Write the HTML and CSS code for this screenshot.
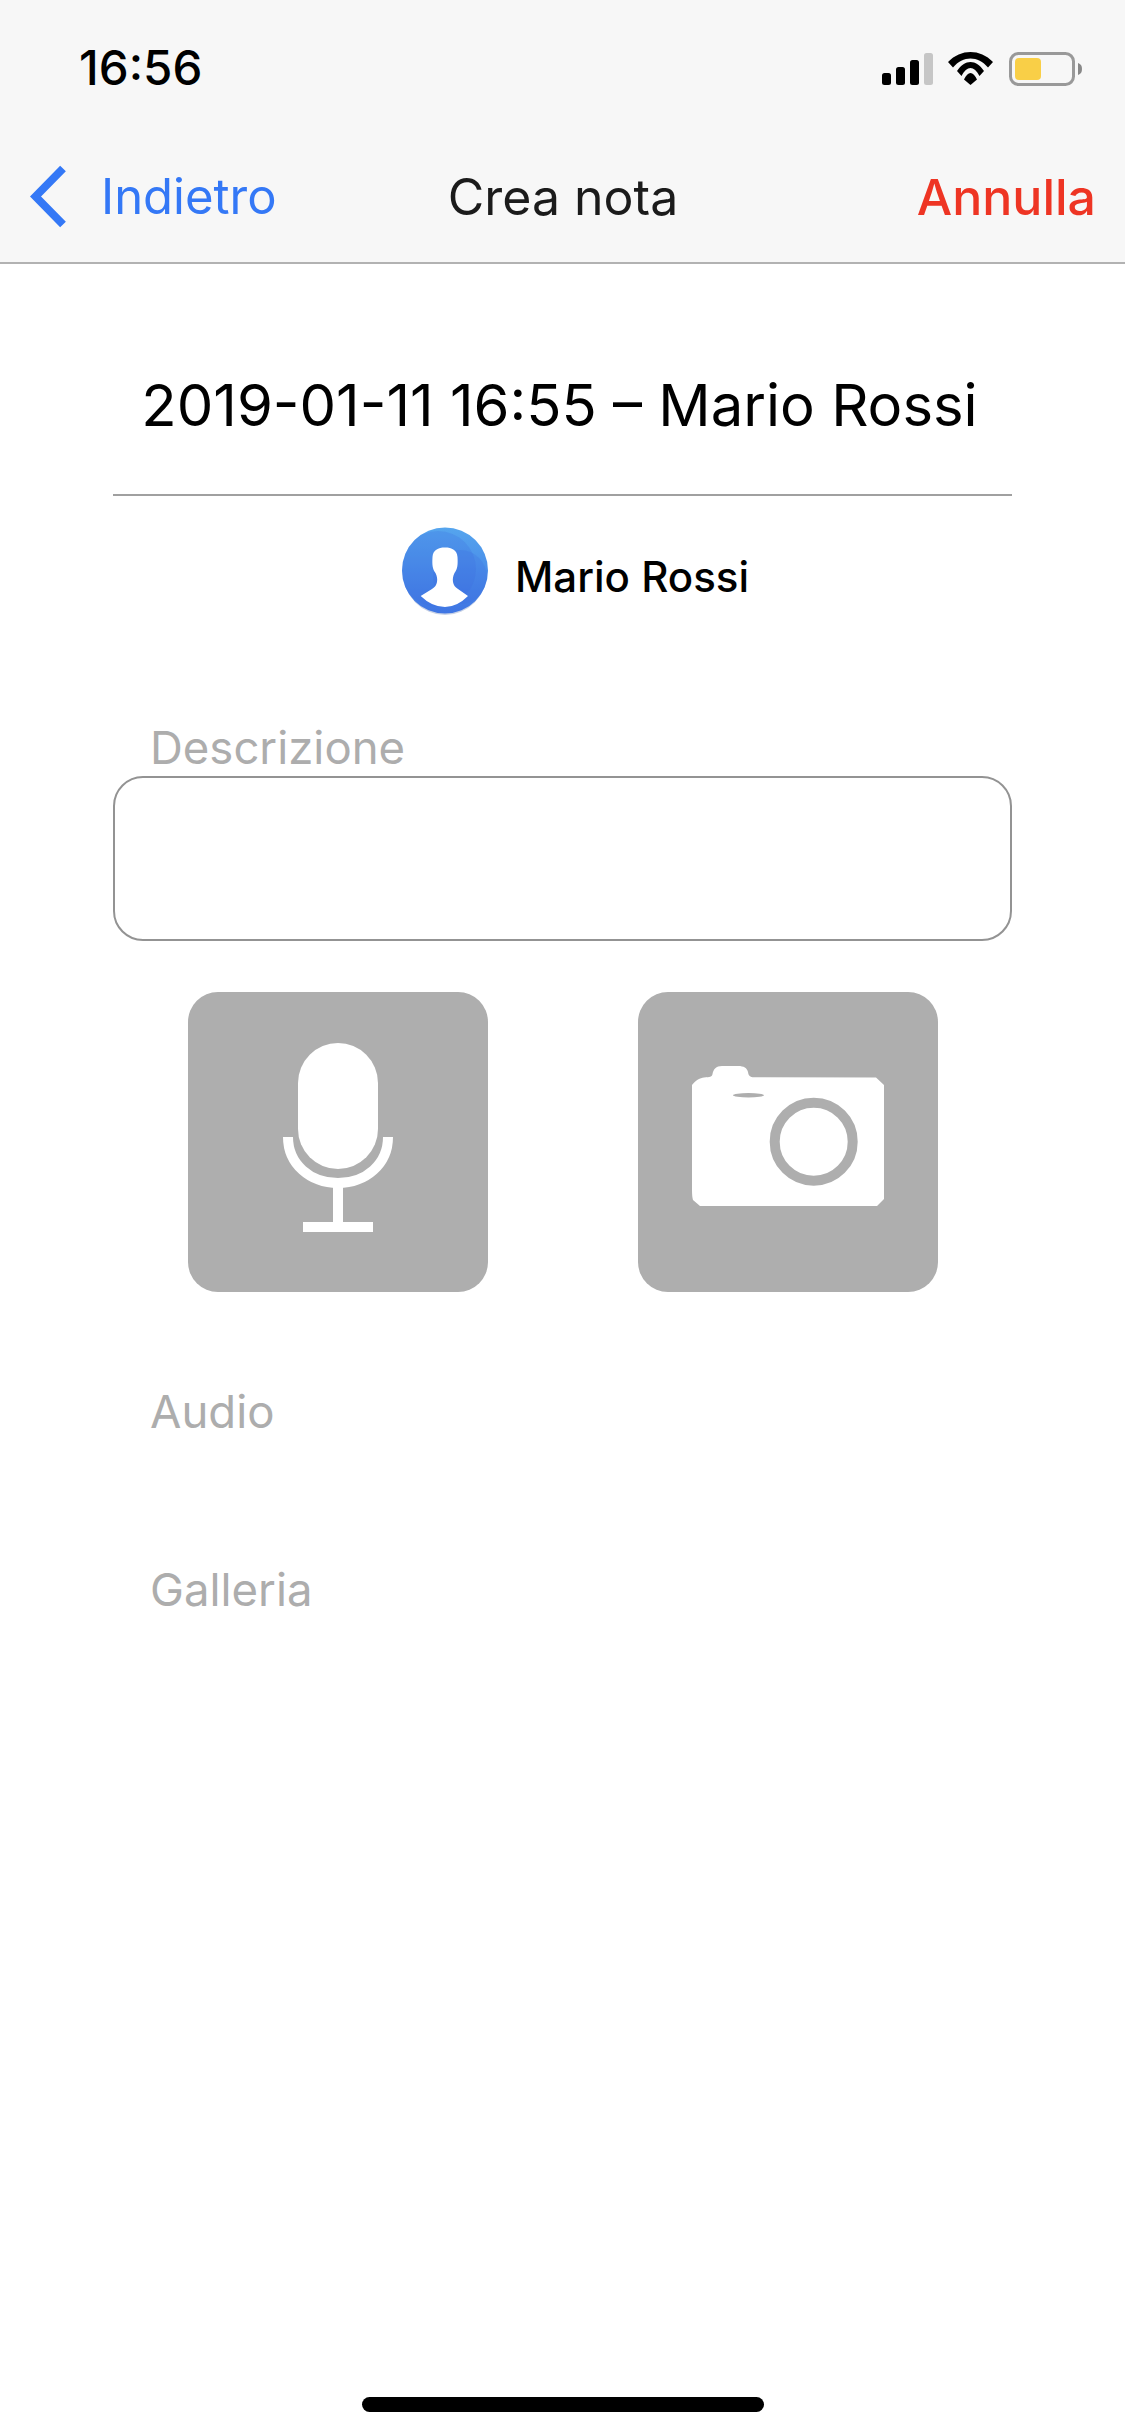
FILE: index.html
```html
<!DOCTYPE html>
<html lang="it">
<head>
  <meta charset="UTF-8" />
  <meta name="viewport" content="width=device-width, initial-scale=1.0" />
  <title>Crea nota</title>
  <link rel="stylesheet" href="styles.css">
</head>
<body>

  <header class="top">
    <div class="status">
      <span class="clock">16:56</span>
      <div class="status-icons">
        <svg class="ico-signal" width="51" height="32" viewBox="0 0 51 32">
          <rect x="0" y="20" width="9" height="12" rx="2.5" fill="#000"/>
          <rect x="14" y="14" width="9" height="18" rx="2.5" fill="#000"/>
          <rect x="28" y="7" width="9" height="25" rx="2.5" fill="#000"/>
          <rect x="42" y="0" width="9" height="32" rx="2.5" fill="#c6c6c6"/>
        </svg>
        <svg class="ico-wifi" width="45" height="33" viewBox="0 0 45 33">
          <path d="M0 10 C13 -3.300 32 -3.300 45 10 L40 15.500 C30 3.500 15 3.500 5 15.500 Z" fill="#000"/>
          <path d="M9 19 C17 7 28 7 36 19 L31.500 24 C26 13.300 19 13.300 13.500 24 Z" fill="#000"/>
          <path d="M16 27.500 C20 18.800 25 18.800 29 27.500 L22.500 33 Z" fill="#000"/>
        </svg>
        <svg class="ico-battery" width="73" height="34" viewBox="0 0 73 34">
          <rect x="1.500" y="1.500" width="63" height="31" rx="8" fill="none" stroke="#999" stroke-width="3"/>
          <rect x="6" y="6" width="26" height="22" rx="4" fill="#f9cf47"/>
          <path d="M69 11 C72 12 73 14 73 17 C73 20 72 22 69 23 Z" fill="#888"/>
        </svg>
      </div>
    </div>
    <nav class="navbar">
      <a class="nav-back" href="#">
        <svg width="36" height="64" viewBox="0 0 36 64">
          <path d="M33 3.500 L5.500 31.500 L33 59.500" fill="none" stroke="#3478f6" stroke-width="8"/>
        </svg>
        <span>Indietro</span>
      </a>
      <span class="nav-title">Crea nota</span>
      <a class="nav-cancel" href="#">Annulla</a>
    </nav>
  </header>

  <main class="content">
    <h1 class="note-title">2019-01-11 16:55 – Mario Rossi</h1>

    <div class="author">
      <svg class="avatar" width="86" height="88" viewBox="0 0 86 88">
        <defs>
          <linearGradient id="avatarBg" x1="0" y1="0" x2="0" y2="1">
            <stop offset="0" stop-color="#55a5ee"/>
            <stop offset="1" stop-color="#3f75e3"/>
          </linearGradient>
          <clipPath id="avatarClip"><circle cx="43" cy="43.500" r="43"/></clipPath>
        </defs>
        <ellipse cx="43" cy="45" rx="42" ry="43" fill="#c9d3e6"/>
        <circle cx="43" cy="43.500" r="43" fill="url(#avatarBg)"/>
        <g clip-path="url(#avatarClip)">
          <circle cx="36" cy="42" r="38" fill="#3a68dd" opacity=".22"/>
          <circle cx="58" cy="50" r="27" fill="#3a68dd" opacity=".22"/>
        </g>
        <path d="M43 20.500 C50 20.500 55 23 55.500 30 C56 38 55.500 42 52.500 46 C51 49 50.500 52 51 55 C51.500 58 53 60 56 62 L66 69 Q55 80 43 80 Q30 80 18.700 69 L30 62 C33 60 34.500 58 35 55 C35.500 52 35 49 33.500 46 C30.500 42 30 38 30.500 30 C31 23 36 20.500 43 20.500 Z" fill="#fff"/>
      </svg>
      <span class="author-name">Mario Rossi</span>
    </div>

    <label class="field-label" for="descrizione">Descrizione</label>
    <div class="text-box" id="descrizione"></div>

    <div class="actions">
      <button class="action-btn" type="button" aria-label="Audio">
        <svg width="300" height="300" viewBox="0 0 300 300">
          <rect x="110" y="51" width="80" height="126" rx="40" fill="#fff"/>
          <path d="M100 145 C100 172 122 191 150 191 C178 191 200 172 200 145" fill="none" stroke="#fff" stroke-width="10"/>
          <rect x="145" y="191" width="10" height="42" fill="#fff"/>
          <rect x="115" y="230" width="70" height="10" fill="#fff"/>
        </svg>
      </button>
      <button class="action-btn" type="button" aria-label="Foto">
        <svg width="300" height="300" viewBox="0 0 300 300">
          <path d="M54 93 C58 88 62 86 66 85.500 C72 85 74 85 74.500 82 C75.500 77 78 74 84 74 H100 C106 74 109 76 110 80 C110.500 84 112 85 116 85.300 L238 85.500 L246 93 V207 L239 214 H62 L55 208 Q54 205 54 198 Z" fill="#fff"/>
          <ellipse cx="110.500" cy="103.300" rx="15.500" ry="2.200" fill="#aeaeae"/>
          <circle cx="175.700" cy="149.700" r="39" fill="none" stroke="#aeaeae" stroke-width="10"/>
        </svg>
      </button>
    </div>

    <div class="section-label section-audio">Audio</div>
    <div class="section-label section-gallery">Galleria</div>
  </main>

  <div class="home-bar"></div>

</body>
</html>
```
FILE: styles.css
```css
* {
  box-sizing: border-box;
  margin: 0;
  padding: 0;
}

html, body {
  height: 100%;
}

body {
  font-family: 'Inter', sans-serif;
  background: #fff;
  color: #000;
  display: flex;
  flex-direction: column;
}

a {
  text-decoration: none;
}

.top {
  height: 264px;
  background: #f7f7f7;
  border-bottom: 2px solid #b2b2b2;
}

.status {
  height: 132px;
  padding: 0 43px 0 79px;
  display: flex;
  justify-content: space-between;
  align-items: flex-start;
}

.clock {
  margin-top: 41px;
  font-size: 47.5px;
  line-height: 54px;
  font-weight: 500;
}

.status-icons {
  display: flex;
  align-items: flex-start;
  gap: 15px;
  margin-top: 52px;
}

.ico-signal {
  margin-top: 1px;
}

.ico-battery {
  margin-left: 1px;
}

.navbar {
  height: 130px;
  padding: 0 29px 0 30px;
  display: grid;
  grid-template-columns: 1fr auto 1fr;
  align-items: center;
  font-size: 49px;
  line-height: 64px;
}

.nav-back {
  display: flex;
  align-items: center;
  gap: 35px;
  color: #3478f6;
}

.nav-title {
  font-size: 50px;
  color: #1b1b1b;
}

.nav-cancel {
  justify-self: end;
  color: #ee3524;
  font-size: 50px;
  font-weight: 500;
}

.content {
  flex: 1;
  padding: 0 113px;
}

.note-title {
  height: 232px;
  padding-top: 104px;
  padding-right: 6px;
  font-size: 58px;
  line-height: 74px;
  font-weight: 400;
  text-align: center;
  white-space: nowrap;
  border-bottom: 2px solid #a0a0a0;
}

.author {
  margin-top: 31px;
  padding-left: 26px;
  display: flex;
  align-items: center;
  justify-content: center;
  gap: 27px;
}

.author-name {
  padding-top: 10px;
  font-size: 42px;
  font-weight: 500;
}

.field-label {
  display: block;
  margin-top: 105px;
  padding-left: 37px;
  color: #adadad;
  font-size: 45.5px;
  line-height: 56px;
}

.text-box {
  height: 165px;
  border: 2px solid #939393;
  border-radius: 30px;
}

.actions {
  margin-top: 51px;
  display: flex;
  justify-content: center;
  gap: 150px;
}

.action-btn {
  width: 300px;
  height: 300px;
  background: #aeaeae;
  border: none;
  border-radius: 30px;
  display: block;
}

.action-btn svg {
  display: block;
}

.section-label {
  padding-left: 37px;
  color: #adadad;
  font-size: 45.5px;
  line-height: 56px;
}

.section-audio {
  margin-top: 92px;
}

.section-gallery {
  margin-top: 122px;
}

.home-bar {
  width: 402px;
  height: 15px;
  border-radius: 7.5px;
  background: #000;
  margin: 0 auto 24px;
}
```
